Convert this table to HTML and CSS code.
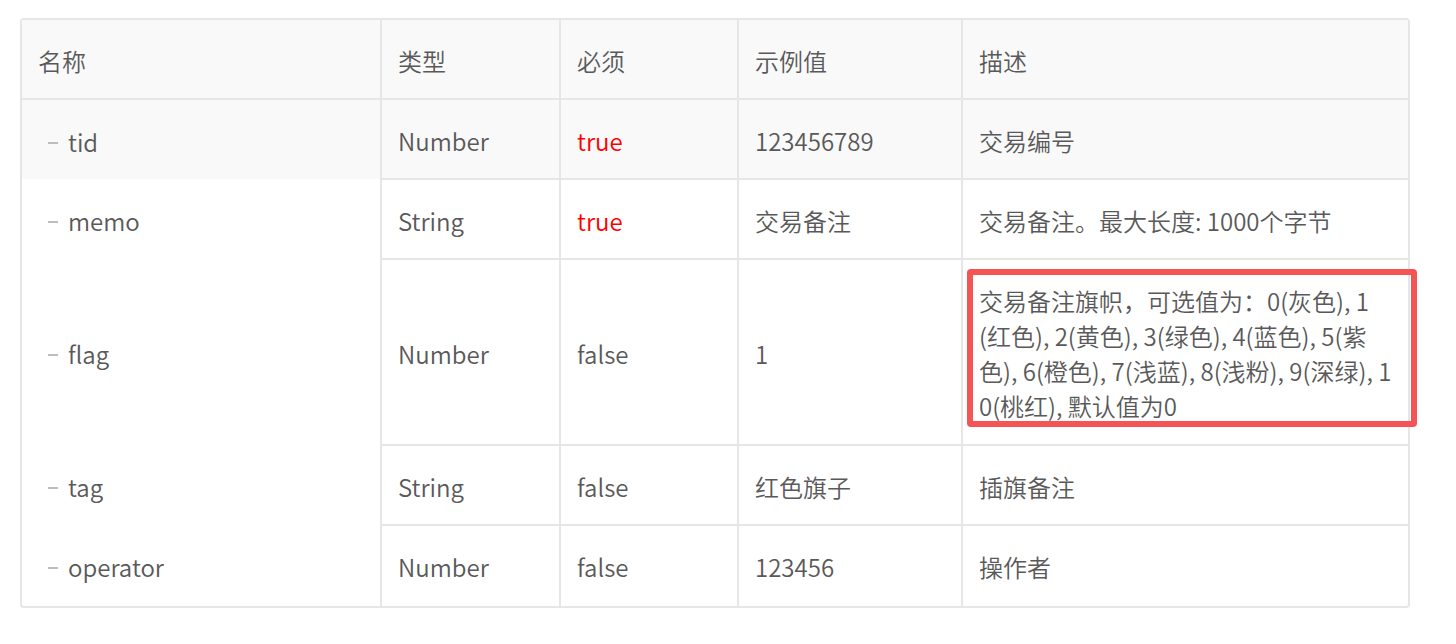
FILE: index.html
```html
<!DOCTYPE html>
<html lang="zh-CN">

<head>
    <meta charset="UTF-8">
    <title>参数说明</title>
    <link rel="stylesheet" href="styles.css">
</head>

<body>

    <div class="table-wrap">
        <table class="params">
            <thead>
                <tr>
                    <th class="col-name">名称</th>
                    <th class="col-type">类型</th>
                    <th class="col-req">必须</th>
                    <th class="col-example">示例值</th>
                    <th class="col-desc">描述</th>
                </tr>
            </thead>
            <tbody>
                <tr class="hover">
                    <td class="name"><span class="dash"></span>tid</td>
                    <td>Number</td>
                    <td class="required">true</td>
                    <td>123456789</td>
                    <td>交易编号</td>
                </tr>
                <tr>
                    <td class="name"><span class="dash"></span>memo</td>
                    <td>String</td>
                    <td class="required">true</td>
                    <td>交易备注</td>
                    <td>交易备注。最大长度: 1000个字节</td>
                </tr>
                <tr class="tall">
                    <td class="name"><span class="dash"></span>flag</td>
                    <td>Number</td>
                    <td>false</td>
                    <td>1</td>
                    <td class="desc marked">
                        交易备注旗帜，可选值为：0(灰色), 1<br>(红色), 2(黄色), 3(绿色), 4(蓝色), 5(紫<br>色), 6(橙色), 7(浅蓝), 8(浅粉), 9(深绿), 1<br>0(桃红), 默认值为0
                        <span class="highlight-box"></span>
                    </td>
                </tr>
                <tr>
                    <td class="name"><span class="dash"></span>tag</td>
                    <td>String</td>
                    <td>false</td>
                    <td>红色旗子</td>
                    <td>插旗备注</td>
                </tr>
                <tr>
                    <td class="name"><span class="dash"></span>operator</td>
                    <td>Number</td>
                    <td>false</td>
                    <td>123456</td>
                    <td>操作者</td>
                </tr>
            </tbody>
        </table>
    </div>

</body>

</html>
```

FILE: styles.css
```css
* {
    box-sizing: border-box;
}

body {
    margin: 0;
    padding: 18px 46px 0 20px;
    background: #fff;
    font-family: "Noto Sans CJK SC", sans-serif;
    font-size: 24px;
    font-weight: 350;
    color: #595959;
}

.table-wrap {
    border: 2px solid #e6e6e6;
    border-radius: 4px;
}

.params {
    width: 100%;
    border-collapse: collapse;
    table-layout: fixed;
}

.col-name {
    width: 359px;
}

.col-type {
    width: 179px;
}

.col-req {
    width: 178px;
}

.col-example {
    width: 224px;
}

th,
td {
    text-align: left;
    font-weight: 350;
    line-height: 35px;
    padding: 23px 15px 20px 16px;
    border: 2px solid #e6e6e6;
    vertical-align: middle;
}

thead th {
    background: #f9f9f9;
    border-top: none;
}

th:first-child,
td:first-child {
    border-left: none;
}

th:last-child,
td:last-child {
    border-right: none;
}

tr.tall td {
    padding-bottom: 21px;
}

tbody tr:last-child td {
    border-bottom: none;
    padding-bottom: 22px;
}

/* tree column: no row separators */
td.name {
    border-top: none;
    border-bottom: none;
    padding-left: 26px;
}

thead th.col-name {
    border-bottom: 2px solid #e6e6e6;
}

.dash {
    display: inline-block;
    width: 10px;
    height: 2px;
    background: #bdbdbd;
    margin-right: 10px;
    vertical-align: middle;
    position: relative;
    top: -2px;
}

tr.hover td {
    background: #f9f9f9;
}

.required {
    color: #f00;
}

.marked {
    position: relative;
    white-space: nowrap;
}

.highlight-box {
    position: absolute;
    left: 4px;
    top: 9px;
    right: -9px;
    bottom: 17px;
    border: 6px solid #f55454;
    border-radius: 4px;
    pointer-events: none;
}
```
